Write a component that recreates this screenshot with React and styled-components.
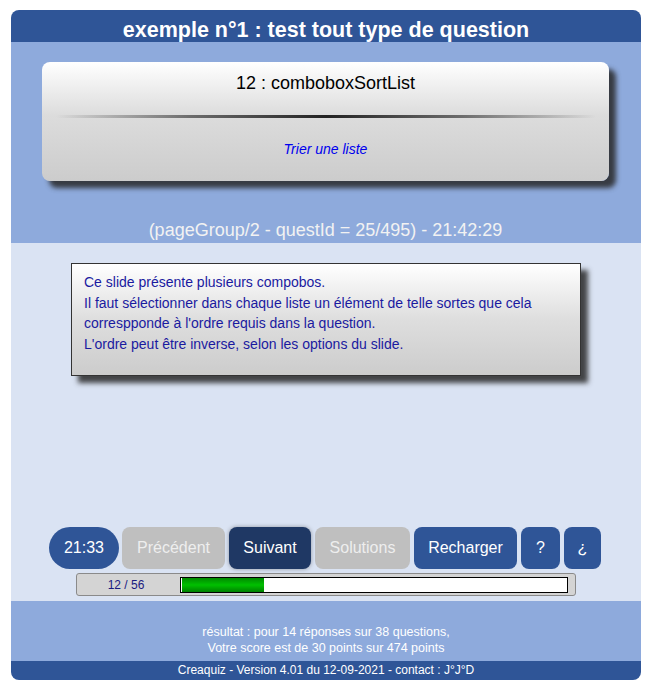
import React from 'react';
import styled, { createGlobalStyle } from 'styled-components';

const GlobalStyle = createGlobalStyle`
  body {
    margin: 0;
    background: #ffffff;
    font-family: "Liberation Sans", Arial, sans-serif;
  }
`;

const buttons = [
  { label: 'Précédent', variant: 'disabled', width: 103 },
  { label: 'Suivant', variant: 'active', width: 82 },
  { label: 'Solutions', variant: 'disabled', width: 95 },
  { label: 'Recharger', variant: 'normal', width: 103 },
  { label: '?', variant: 'normal', width: 39 },
  { label: '¿', variant: 'normal', width: 37 },
];

const App = () => {
  const current = 12;
  const total = 56;
  return (
    <>
      <GlobalStyle />
      <Frame>
        <Header>exemple n°1 : test tout type de question</Header>

        <TopZone>
          <SlideCard>
            <SlideTitle>12 : comboboxSortList</SlideTitle>
            <Separator />
            <SlideSubtitle>Trier une liste</SlideSubtitle>
          </SlideCard>
          <Caption>(pageGroup/2 - questId = 25/495) - 21:42:29</Caption>
        </TopZone>

        <MainZone>
          <Description>
            Ce slide présente plusieurs compobos.<br />
            Il faut sélectionner dans chaque liste un élément de telle sortes que cela correspponde à l'ordre requis dans la question.<br />
            L'ordre peut être inverse, selon les options du slide.
          </Description>

          <Controls>
            <Toolbar>
              <Timer>21:33</Timer>
              {buttons.map(b => (
                <NavButton key={b.label} $variant={b.variant} $w={b.width}>{b.label}</NavButton>
              ))}
            </Toolbar>
            <Progress>
              <ProgressLabel>{current} / {total}</ProgressLabel>
              <ProgressTrack>
                <ProgressFill style={{ width: `${(current / total) * 100}%` }} />
              </ProgressTrack>
            </Progress>
          </Controls>
        </MainZone>

        <ScoreZone>
          résultat : pour 14 réponses sur 38 questions,<br />
          Votre score est de 30 points sur 474 points
        </ScoreZone>
        <Footer>Creaquiz - Version 4.01 du 12-09-2021 - contact : J°J°D</Footer>
      </Frame>
    </>
  );
};

export default App;

const Frame = styled.div`
    width: 630px;
    margin: 10px 0 0 11px;
    border-radius: 8px;
    overflow: hidden;
    display: flex;
    flex-direction: column;
`

const Header = styled.div`
    height: 32px;
    box-sizing: border-box;
    padding-top: 8px;
    background: #2f5597;
    color: #ffffff;
    font-weight: bold;
    font-size: 21.5px;
    text-align: center;
    line-height: 24px;
`

const TopZone = styled.div`
    background: #8eaadc;
    height: 201px;
    padding: 20px 32px 0 31px;
    box-sizing: border-box;
    display: flex;
    flex-direction: column;
`

const SlideCard = styled.div`
    height: 119px;
    border-radius: 8px;
    background: linear-gradient(to bottom, #ffffff 0%, #dcdcdc 45%, #cccccc 100%);
    box-shadow: 7px 7px 5px rgba(40, 40, 40, 0.85);
    display: flex;
    flex-direction: column;
    align-items: center;
`

const SlideTitle = styled.div`
    font-size: 18px;
    color: #000000;
    margin-top: 11px;
    line-height: 21px;
`

const Separator = styled.div`
    width: 540px;
    height: 3px;
    margin-top: 21px;
    border-radius: 2px;
    background: linear-gradient(to right, rgba(0,0,0,0) 0%, rgba(60,60,60,0.7) 25%, #222 50%, rgba(60,60,60,0.7) 75%, rgba(0,0,0,0) 100%);
`

const SlideSubtitle = styled.div`
    margin-top: 23px;
    font-size: 14px;
    font-style: italic;
    color: #0000ee;
`

const Caption = styled.div`
    margin-top: 39px;
    text-align: center;
    font-size: 18px;
    color: #f2f2f2;
`

const MainZone = styled.div`
    background: #dae3f3;
    height: 358px;
    padding-top: 20px;
    box-sizing: border-box;
    display: flex;
    flex-direction: column;
`

const Description = styled.div`
    margin-left: 60px;
    width: 510px;
    height: 113px;
    box-sizing: border-box;
    border: 1px solid #333333;
    padding: 8px 12px;
    background: linear-gradient(to bottom, #ffffff 0%, #dedede 50%, #cccccc 100%);
    box-shadow: 7px 7px 5px rgba(40, 40, 40, 0.85);
    color: #1a1aa0;
    font-size: 14px;
    line-height: 20.7px;
`

const Controls = styled.div`
    margin-top: auto;
    margin-bottom: 5px;
    display: flex;
    flex-direction: column;
    align-items: center;
    gap: 4px;
`

const Toolbar = styled.div`
    display: flex;
    gap: 4px;
    margin-left: -2px;
`

const Timer = styled.div`
    width: 70px;
    height: 42px;
    border-radius: 21px;
    background: #2f5597;
    color: #ffffff;
    font-size: 16px;
    display: flex;
    align-items: center;
    justify-content: center;
    margin-right: -1px;
`

const variants = {
  disabled: { bg: '#bfbfbf', fg: '#eeeeee' },
  active: { bg: '#1f3864', fg: '#ffffff' },
  normal: { bg: '#2f5597', fg: '#ffffff' },
};

const NavButton = styled.div`
    width: ${({ $w }) => $w}px;
    height: 42px;
    border-radius: 8px;
    background: ${({ $variant }) => variants[$variant].bg};
    color: ${({ $variant }) => variants[$variant].fg};
    font-size: 16px;
    display: flex;
    align-items: center;
    justify-content: center;
    box-shadow: ${({ $variant }) => $variant === 'active' ? '0 0 4px rgba(0,0,0,0.35)' : 'none'};
`

const Progress = styled.div`
    width: 500px;
    height: 23px;
    box-sizing: border-box;
    border: 1px solid #8a8a8a;
    border-radius: 3px;
    background: #d4d4d4;
    display: flex;
    align-items: center;
    padding-right: 7px;
`

const ProgressLabel = styled.div`
    width: 103px;
    text-align: center;
    font-size: 12px;
    color: #1a1a80;
    padding-right: 5px;
    box-sizing: border-box;
`

const ProgressTrack = styled.div`
    flex: 1;
    height: 16px;
    box-sizing: border-box;
    border: 1px solid #000000;
    background: #ffffff;
    display: flex;
`

const ProgressFill = styled.div`
    height: 100%;
    border-left: 1px solid #ffffff;
    box-sizing: border-box;
    background: linear-gradient(to bottom, #008a00 0%, #00c000 50%, #008000 100%);
`

const ScoreZone = styled.div`
    background: #8eaadc;
    height: 60px;
    box-sizing: border-box;
    padding-top: 23px;
    text-align: center;
    color: #ffffff;
    font-size: 12.5px;
    line-height: 16px;
`

const Footer = styled.div`
    background: #2f5597;
    height: 19px;
    line-height: 19px;
    text-align: center;
    color: #ffffff;
    font-size: 12px;
`
